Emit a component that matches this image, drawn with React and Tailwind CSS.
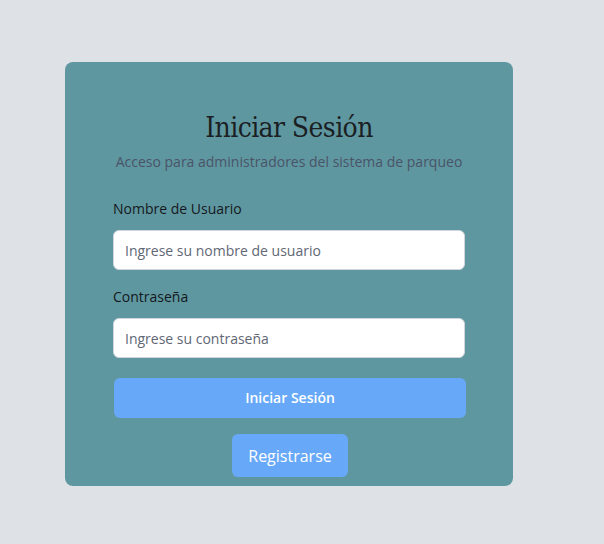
export default function App() {
  return (
    <div className="min-h-[544px] w-full bg-[#dee1e6] pt-[62px] pl-[65px]" style={{ fontFamily: '"Open Sans", sans-serif' }}>
      <div className="w-[448px] rounded-lg bg-[#5f97a0] px-12 pt-12 pb-[9px] flex flex-col">
        <h1 className="text-center text-[28px] leading-9 tracking-[-0.6px] text-[#1b1f24] font-stretch-condensed" style={{ fontFamily: '"DejaVu Serif Condensed", "DejaVu Serif", serif' }}>
          Iniciar Sesión
        </h1>
        <p className="mt-[6px] text-center text-sm leading-5 text-[#4a5468]">
          Acceso para administradores del sistema de parqueo
        </p>
        <label className="mt-[27px] block text-sm leading-5 text-[#14181d]">Nombre de Usuario</label>
        <input
          type="text"
          placeholder="Ingrese su nombre de usuario"
          className="mt-[11px] h-10 w-full rounded-md border border-[#d1d5db] bg-white pl-[11px] pr-3 text-sm text-[#374151] placeholder:text-[#5f6775] outline-none"
        />
        <label className="mt-[17px] block text-sm leading-5 text-[#14181d]">Contraseña</label>
        <input
          type="password"
          placeholder="Ingrese su contraseña"
          className="mt-[11px] h-10 w-full rounded-md border border-[#d1d5db] bg-white pl-[11px] pr-3 text-sm text-[#374151] placeholder:text-[#5f6775] outline-none"
        />
        <button className="mt-5 ml-px h-10 w-full rounded-md bg-[#67a9f8] text-sm font-semibold text-white">
          Iniciar Sesión
        </button>
        <div className="mt-4 flex justify-center pl-[2px]">
          <button className="h-[43px] w-[116px] rounded-md bg-[#67a9f8] text-base font-medium text-white">
            Registrarse
          </button>
        </div>
      </div>
    </div>
  );
}
